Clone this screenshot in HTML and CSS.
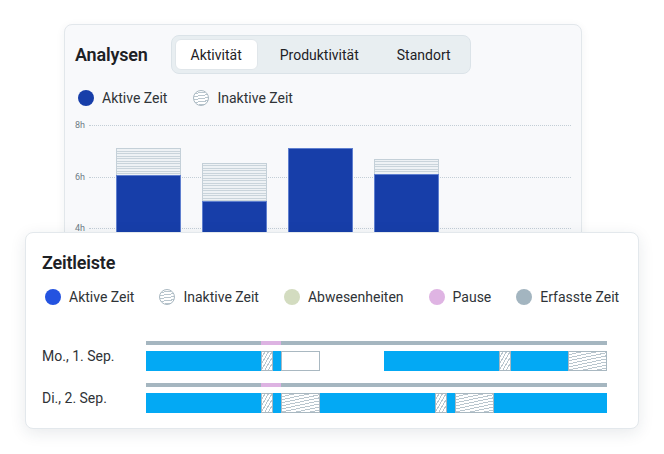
FILE: index.html
```html
<!DOCTYPE html>
<html lang="de">
<head>
  <meta charset="UTF-8" />
  <meta name="viewport" content="width=device-width, initial-scale=1.0"/>
  <title>Analysen &amp; Zeitleiste</title>
  <link rel="stylesheet" href="styles.css">
</head>
<body>

  <div class="stage">

    <!-- Analysen card (sits behind) -->
    <section class="card analytics">
      <div class="analytics-head">
        <h2 class="card-title">Analysen</h2>
        <div class="tabs">
          <button class="tab active">Aktivität</button>
          <button class="tab">Produktivität</button>
          <button class="tab">Standort</button>
        </div>
      </div>

      <div class="legend legend-top">
        <span class="legend-item"><i class="dot dot-dark"></i>Aktive Zeit</span>
        <span class="legend-item"><i class="dot dot-hatch"></i>Inaktive Zeit</span>
      </div>

      <div class="chart">
        <div class="grid-row"><span class="tick">8h</span><span class="rule"></span></div>
        <div class="grid-row"><span class="tick">6h</span><span class="rule"></span></div>
        <div class="grid-row"><span class="tick">4h</span><span class="rule"></span></div>
        <div class="grid-row"><span class="tick"></span><span class="rule"></span></div>

        <div class="bars">
          <div class="bar"><div class="bar-idle" style="height:27px"></div><div class="bar-active" style="height:156px"></div></div>
          <div class="bar"><div class="bar-idle" style="height:38px"></div><div class="bar-active" style="height:130px"></div></div>
          <div class="bar"><div class="bar-active" style="height:183px"></div></div>
          <div class="bar"><div class="bar-idle" style="height:15px"></div><div class="bar-active" style="height:157px"></div></div>
        </div>
      </div>
    </section>

    <!-- Zeitleiste card (on top) -->
    <section class="card timeline">
      <h2 class="card-title">Zeitleiste</h2>

      <div class="legend legend-bottom">
        <span class="legend-item"><i class="dot dot-blue"></i>Aktive Zeit</span>
        <span class="legend-item"><i class="dot dot-hatch"></i>Inaktive Zeit</span>
        <span class="legend-item"><i class="dot dot-away"></i>Abwesenheiten</span>
        <span class="legend-item"><i class="dot dot-pause"></i>Pause</span>
        <span class="legend-item"><i class="dot dot-tracked"></i>Erfasste Zeit</span>
      </div>

      <div class="days">
        <div class="day">
          <span class="day-label">Mo., 1. Sep.</span>
          <div class="track">
            <div class="tracked"><span class="pause" style="margin-left:115px;width:20px"></span></div>
            <div class="segments">
              <span class="seg active" style="width:115px"></span>
              <span class="seg hatch-n" style="width:12px"></span>
              <span class="seg active" style="width:8px"></span>
              <span class="seg open" style="width:39px"></span>
              <span class="seg" style="width:64px"></span>
              <span class="seg active" style="width:115px"></span>
              <span class="seg hatch-n" style="width:12px"></span>
              <span class="seg active" style="width:57px"></span>
              <span class="seg hatch-w" style="width:39px"></span>
            </div>
          </div>
        </div>

        <div class="day">
          <span class="day-label">Di., 2. Sep.</span>
          <div class="track">
            <div class="tracked"><span class="pause" style="margin-left:115px;width:20px"></span></div>
            <div class="segments">
              <span class="seg active" style="width:115px"></span>
              <span class="seg hatch-n" style="width:12px"></span>
              <span class="seg active" style="width:8px"></span>
              <span class="seg hatch-w" style="width:39px"></span>
              <span class="seg active" style="width:115px"></span>
              <span class="seg hatch-n" style="width:12px"></span>
              <span class="seg active" style="width:8px"></span>
              <span class="seg hatch-w" style="width:39px"></span>
              <span class="seg active" style="width:113px"></span>
            </div>
          </div>
        </div>
      </div>
    </section>

  </div>

</body>
</html>
```

FILE: styles.css
```css
:root {
  --ink: #1d2125;
  --text: #2f3337;
  --muted: #6e7c86;
  --dark-blue: #173ea9;
  --cyan: #03a9f4;
  --tracked: #a5b6c0;
  --pause: #ddb3e2;
  --hatch-line: #b9c6ce;
  --hatch-border: #a9b8c1;
}

* {
  box-sizing: border-box;
  font-family: Roboto, 'Liberation Sans', sans-serif;
}

body {
  margin: 0;
  background: #fff;
  color: var(--text);
}

.stage {
  padding-top: 24px;
  width: 664px;
  height: 454px;
  overflow: hidden;
}

.card {
  border-radius: 8px;
}

.card-title {
  margin: 0;
  font-size: 18px;
  line-height: 24px;
  font-weight: 600;
  letter-spacing: -0.2px;
  color: var(--ink);
}

/* ---------- Analysen ---------- */

.analytics {
  margin-left: 64px;
  width: 518px;
  height: 240px;
  padding: 10px 10px 0 10px;
  background: #f8f9fb;
  border: 1px solid #e2e7eb;
  box-shadow: 0 2px 10px rgba(30, 50, 70, 0.06);
  overflow: hidden;
}

.analytics-head {
  display: flex;
  align-items: center;
  gap: 23px;
}

.tabs {
  display: flex;
  gap: 6px;
  padding: 3px;
  background: #e8eef1;
  border: 1px solid #dbe3e8;
  border-radius: 8px;
}

.tab {
  height: 31px;
  padding: 0 15px;
  border: 1px solid transparent;
  border-radius: 6px;
  background: transparent;
  font-size: 14px;
  color: var(--ink);
  cursor: pointer;
}

.tab.active {
  background: #fff;
  border-color: #e0e6ea;
}

.legend {
  display: flex;
  align-items: center;
  font-size: 14px;
  line-height: 20px;
  color: var(--text);
  white-space: nowrap;
}

.legend-top {
  margin-top: 14px;
  padding-left: 3px;
  gap: 26px;
}

.legend-item {
  display: flex;
  align-items: center;
  gap: 8px;
}

.dot {
  display: block;
  flex: none;
  width: 16px;
  height: 16px;
  border-radius: 50%;
}

.dot-dark { background: var(--dark-blue); }
.dot-blue { background: #2453e0; }
.dot-away { background: #d3dcc0; }
.dot-pause { background: #dfb4e3; }
.dot-tracked { background: #a3b5c0; }

.dot-hatch {
  border: 1px solid var(--hatch-border);
  background: repeating-linear-gradient(172deg, #fff 0 2px, var(--hatch-line) 2px 3px);
}

.chart {
  position: relative;
  margin-top: 17px;
}

.grid-row {
  display: flex;
  height: 51.5px;
}

.tick {
  width: 14px;
  font-size: 9px;
  line-height: 10px;
  color: var(--muted);
  transform: translateY(-5px);
}

.rule {
  flex: 1;
  border-top: 1px dotted #c3ced6;
}

.bars {
  position: absolute;
  left: 41px;
  top: 0;
  bottom: 0;
  display: flex;
  align-items: flex-end;
  gap: 21px;
}

.bar {
  width: 65px;
  display: flex;
  flex-direction: column;
}

.bar-idle {
  border: 1px solid #c4d0d8;
  border-bottom: none;
  background: repeating-linear-gradient(180deg, #eef2f5 0 1.5px, #c9d4db 1.5px 2.5px);
}

.bar-active {
  background: var(--dark-blue);
  border: 1px solid #5f7fcf;
  border-bottom: none;
}

/* ---------- Zeitleiste ---------- */

.timeline {
  position: relative;
  margin-top: -32px;
  margin-left: 25px;
  width: 614px;
  height: 197px;
  padding: 18px 16px 0 16px;
  background: #fff;
  border: 1px solid #e3e8ec;
  box-shadow: 0 4px 16px rgba(30, 50, 70, 0.1);
}

.legend-bottom {
  margin-top: 12px;
  padding-left: 3px;
  gap: 25px;
}

.days {
  margin-top: 34px;
  display: flex;
  flex-direction: column;
  gap: 12px;
}

.day {
  display: flex;
  align-items: center;
}

.day-label {
  width: 104px;
  font-size: 14px;
  color: var(--text);
}

.track {
  width: 461px;
  display: flex;
  flex-direction: column;
  gap: 6px;
}

.tracked {
  display: flex;
  height: 4px;
  background: var(--tracked);
}

.pause {
  display: block;
  background: var(--pause);
}

.segments {
  display: flex;
  height: 20px;
}

.seg {
  display: block;
  flex: none;
}

.seg.active { background: var(--cyan); }

.seg.open {
  background: #fff;
  border: 1px solid var(--hatch-border);
}

.seg.hatch-n,
.seg.hatch-w {
  border: 1px solid var(--hatch-border);
}

.seg.hatch-n {
  background: repeating-linear-gradient(120deg, #fff 0 2px, var(--hatch-line) 2px 3px);
}

.seg.hatch-w {
  background: repeating-linear-gradient(168deg, #fff 0 2px, var(--hatch-line) 2px 3px);
}
```
